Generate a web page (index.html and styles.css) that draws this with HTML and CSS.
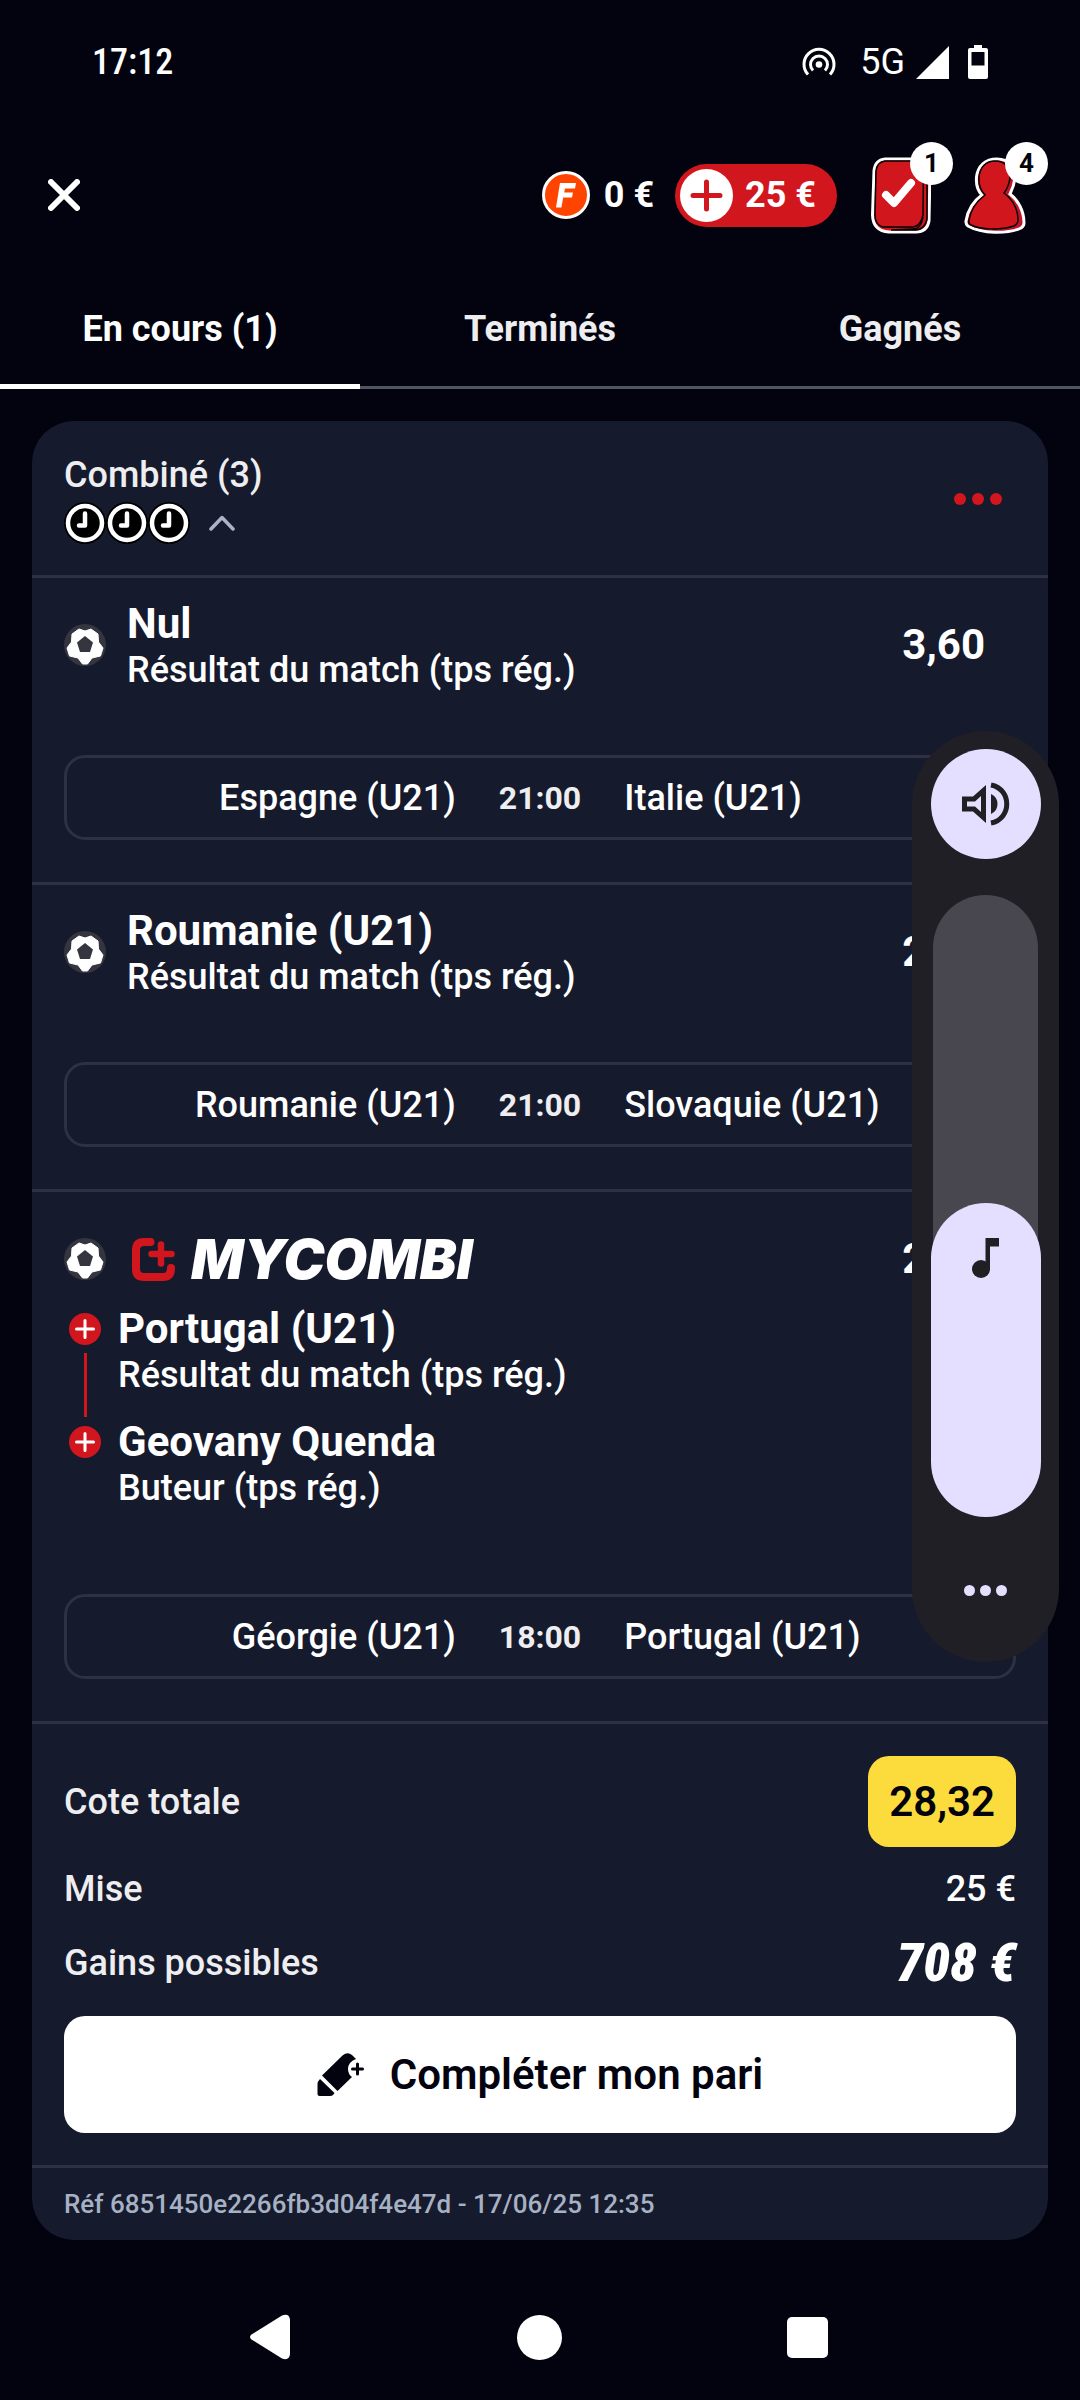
FILE: index.html
```html
<!DOCTYPE html>
<html lang="fr">
<head>
<meta charset="utf-8">
<meta name="viewport" content="width=device-width, initial-scale=1">
<title>Mes paris</title>
<link rel="stylesheet" href="styles.css">
</head>
<body>
<svg class="defs" aria-hidden="true">
  <symbol id="ball" viewBox="0 0 42 42">
    <circle cx="21" cy="21" r="21" fill="#35353f"/>
    <path d="M15 5 L21 7 L27 5 L34 10 L34.500 18 L39 24 L36.500 32 L28 34 L23.500 40 H18.500 L14 34 L5.500 32 L3 24 L7.500 18 L8 10 Z" fill="#fff" stroke="#fff" stroke-linejoin="round"/>
    <path d="M21 12 L29 18.500 L26 28 H16 L13 18.500 Z" fill="#35353f"/>
  </symbol>
  <symbol id="clock" viewBox="0 0 42 42">
    <circle cx="21" cy="21" r="21" fill="#000"/>
    <circle cx="21" cy="21" r="17" fill="#000" stroke="#fff" stroke-width="4.500"/>
    <path d="M21 11.500 V23.500 H15" fill="none" stroke="#fff" stroke-width="4.500" stroke-linecap="round" stroke-linejoin="round"/>
  </symbol>
  <symbol id="plus" viewBox="0 0 32 32">
    <circle cx="16" cy="16" r="16" fill="#d2161e"/>
    <path d="M16 7.500 V24.500 M7.500 16 H24.500" stroke="#fff" stroke-width="3" stroke-linecap="round"/>
  </symbol>
</svg>

<div class="page">
  <div class="status">
    <span class="status-time">17:12</span>
    <div class="status-icons">
      <svg class="hotspot" width="34" height="30" viewBox="0 0 34 30" fill="none" stroke="#fff" stroke-width="3">
        <path d="M6 27.500 A15 15 0 1 1 28 27.500"/>
        <path d="M11 23.500 A8.500 8.500 0 1 1 23 23.500"/>
        <circle cx="17" cy="17.500" r="3.300" fill="#fff" stroke="none"/>
      </svg>
      <span class="network">5G</span>
      <svg class="signal" width="33" height="33" viewBox="0 0 33 33"><path d="M33 0 V33 H0 Z" fill="#fff"/></svg>
      <svg width="20" height="34" viewBox="0 0 20 34"><path fill="#fff" fill-rule="evenodd" d="M6 0 H14 V3 H18 Q20 3 20 5 V32 Q20 34 18 34 H2 Q0 34 0 32 V5 Q0 3 2 3 H6 Z M3.500 7 V20.500 H16.500 V7 Z"/></svg>
    </div>
  </div>

  <header class="header">
    <button class="icon-btn close" aria-label="Fermer">
      <svg width="32" height="32" viewBox="0 0 32 32"><path d="M3 3 L29 29 M29 3 L3 29" stroke="#fff" stroke-width="6" stroke-linecap="round"/></svg>
    </button>
    <div class="wallet">
      <div class="coins">
        <svg width="48" height="48" viewBox="0 0 48 48">
          <circle cx="24" cy="24" r="22.500" fill="#ff4400" stroke="#fff" stroke-width="3"/>
          <path d="M18 12 H34 L33 17.500 H23 L22.200 21.500 H31 L30 26.500 H21.200 L19.400 36.500 H14 Z" fill="#fff"/>
        </svg>
        <span>0 €</span>
      </div>
      <button class="deposit">
        <svg width="53" height="53" viewBox="0 0 53 53"><circle cx="26.500" cy="26.500" r="26.500" fill="#fff"/><path d="M26.500 13 V40 M13 26.500 H40" stroke="#d2161e" stroke-width="5" stroke-linecap="round"/></svg>
        <span>25 €</span>
      </button>
    </div>
    <button class="icon-btn shortcut" aria-label="Mes paris">
      <svg width="60" height="77" viewBox="0 0 60 77">
        <path d="M14 2 H48 Q59 3 59 14 L58 64 Q56 75 45 75 H18 Q2 74 1.500 58 L3 14 Q4 3 14 2 Z" fill="#d2161e" stroke="#fff" stroke-width="3"/>
        <path d="M14 4 H46 Q53 5 52.500 13 L52 58 Q50 69 42 70 H12 Q4 68 4 58 L5 14 Q6 5 14 4 Z" fill="#d2161e" stroke="#000" stroke-width="1.500"/>
        <path d="M52 60 Q50 72 42 72 L20 73 H45 Q54 72 56 62 V20" fill="none" stroke="#000" stroke-width="1.500"/>
        <path d="M15 38 L23 46 L40 26" fill="none" stroke="#fff" stroke-width="8" stroke-linecap="round" stroke-linejoin="round"/>
      </svg>
      <span class="count">1</span>
    </button>
    <button class="icon-btn shortcut" aria-label="Mon compte">
      <svg width="62" height="77" viewBox="0 0 62 77">
        <path d="M33 2 C45 2 52 11 51 21 C50 29 48 33 46 37 C54 43 60 54 60 66 Q60 69 57 71 C44 77 18 77 4 69 Q1.500 67 2 64 C4 52 11 43 18 38 C13 33 12 26 12.500 20 C14 9 21 2 33 2 Z" fill="#c01528" stroke="#fff" stroke-width="3"/>
        <path d="M31 4 C41 4 47 11 46 21 C45 29 43 32 40 36 C49 43 54 53 54 63 Q54 67 50 69 C38 73 16 73 7 68 Q4 67 5 63 C7 52 13 44 21 38 C16 33 14.500 27 15 20 C16 10 22 4 31 4 Z" fill="#d2161e" stroke="#000" stroke-width="1.500"/>
      </svg>
      <span class="count">4</span>
    </button>
  </header>

  <nav class="tabs">
    <a class="tab tab-active" href="#en-cours">En cours (1)</a>
    <a class="tab" href="#termines">Terminés</a>
    <a class="tab" href="#gagnes">Gagnés</a>
  </nav>

  <main class="card" id="en-cours">
    <div class="card-head">
      <div>
        <h1 class="card-title">Combiné (3)</h1>
        <div class="clocks">
          <svg class="glyph"><use href="#clock"/></svg>
          <svg class="glyph"><use href="#clock"/></svg>
          <svg class="glyph"><use href="#clock"/></svg>
          <button class="icon-btn toggle" aria-label="Replier"><svg width="26" height="16" viewBox="0 0 26 16"><path d="M2 14 L13 2.500 L24 14" fill="none" stroke="#a9b4c6" stroke-width="3.500" stroke-linecap="round" stroke-linejoin="round"/></svg></button>
        </div>
      </div>
      <button class="icon-btn more" aria-label="Options"><i></i><i></i><i></i></button>
    </div>

    <section class="leg">
      <div class="pick">
        <svg class="glyph"><use href="#ball"/></svg>
        <div class="pick-text"><h2>Nul</h2><p>Résultat du match (tps rég.)</p></div>
        <span class="odds">3,60</span>
      </div>
      <div class="match"><span class="home">Espagne (U21)</span><time>21:00</time><span>Italie (U21)</span></div>
    </section>

    <section class="leg">
      <div class="pick">
        <svg class="glyph"><use href="#ball"/></svg>
        <div class="pick-text"><h2>Roumanie (U21)</h2><p>Résultat du match (tps rég.)</p></div>
        <span class="odds">2,85</span>
      </div>
      <div class="match"><span class="home">Roumanie (U21)</span><time>21:00</time><span>Slovaquie (U21)</span></div>
    </section>

    <section class="leg leg-combi">
      <div class="pick combi-head">
        <svg class="glyph"><use href="#ball"/></svg>
        <div class="brand">
          <svg width="43" height="43" viewBox="0 0 43 43" fill="none" stroke="#d2161e" stroke-linecap="round">
            <path d="M18.500 4 H12 Q4 4 4 12 V31 Q4 39 12 39 H31 Q39 39 39 30" stroke-width="8"/>
            <path d="M29 6.500 V25.500 M19.500 16 H39.500" stroke-width="6.500"/>
          </svg>
          <span>MYCOMBI</span>
        </div>
        <span class="odds">2,76</span>
      </div>
      <ul class="selections">
        <li><div class="rail"><svg class="plus"><use href="#plus"/></svg></div><div><h2>Portugal (U21)</h2><p>Résultat du match (tps rég.)</p></div></li>
        <li><div class="rail"><svg class="plus"><use href="#plus"/></svg></div><div><h2>Geovany Quenda</h2><p>Buteur (tps rég.)</p></div></li>
      </ul>
      <div class="match"><span class="home">Géorgie (U21)</span><time>18:00</time><span>Portugal (U21)</span></div>
    </section>

    <section class="summary">
      <dl>
        <div class="row"><dt>Cote totale</dt><dd class="total">28,32</dd></div>
        <div class="row"><dt>Mise</dt><dd>25 €</dd></div>
        <div class="row row-gain"><dt>Gains possibles</dt><dd class="gain">708 €</dd></div>
      </dl>
      <button class="complete">
        <svg width="47" height="44" viewBox="0 0 47 44" fill="#03030f">
          <path d="M25.500 2.500 Q30.500 -1.500 35 2 L39 6 Q31 9 31 16 Q31 21 35 24 L20.500 38 L5 22.500 Z"/>
          <path d="M3 26 L17.500 40 L16 42 Q15 43 13 43 H2.500 Q0.500 43 0.500 41 V31 Q0.500 28.500 3 26 Z"/>
          <path d="M40.500 11 V21 M35.500 16 H45.500" stroke="#03030f" stroke-width="3" stroke-linecap="round"/>
        </svg>
        <span>Compléter mon pari</span>
      </button>
    </section>

    <footer class="ref">Réf 6851450e2266fb3d04f4e47d - 17/06/25 12:35</footer>
  </main>

  <nav class="system-nav" aria-label="Système">
    <button class="icon-btn" aria-label="Retour"><svg width="45" height="46" viewBox="0 0 45 46"><path d="M2.500 20.500 L33 1.500 Q40.500 -1 41 6 V40 Q40.500 47 33 44.500 L2.500 25.500 Q-0.500 23 2.500 20.500 Z" fill="#fff"/></svg></button>
    <button class="icon-btn" aria-label="Accueil"><svg width="45" height="45" viewBox="0 0 45 45"><circle cx="22.500" cy="22.500" r="22.500" fill="#fff"/></svg></button>
    <button class="icon-btn" aria-label="Applications récentes"><svg width="41" height="41" viewBox="0 0 41 41"><rect width="41" height="41" rx="5" fill="#fff"/></svg></button>
  </nav>

  <aside class="volume">
    <button class="icon-btn ringer" aria-label="Son">
      <svg width="48" height="48" viewBox="1 0 48 48">
        <path d="M1 16.500 H12 L25 5 V43 L12 31.500 H1 Z M6 21.500 V26.500 H14 L20 32 V16 L14 21.500 Z" fill="#1f1f24" fill-rule="evenodd"/>
        <path d="M30 14 Q36.500 17 36.500 24 Q36.500 31 30 34 Z" fill="#1f1f24"/>
        <path d="M30 5 C51 9 51 39 30 43" fill="none" stroke="#1f1f24" stroke-width="5"/>
      </svg>
    </button>
    <label class="level">
      <span class="level-fill" style="height:50.500%">
        <svg width="28" height="42" viewBox="0 0 28 42" fill="#1f1f24"><circle cx="9" cy="32" r="9"/><path d="M13.500 1 H27 V9.500 H18 V32 H13.500 Z"/></svg>
      </span>
      <input type="range" min="0" max="100" value="50" aria-label="Volume multimédia">
    </label>
    <button class="icon-btn more more-volume" aria-label="Plus de réglages"><i></i><i></i><i></i></button>
  </aside>
</div>
</body>
</html>
```
FILE: styles.css
```css
:root {
  --bg: #03030f;
  --card: #161a2d;
  --line: #2e3044;
  --red: #d2161e;
  --lilac: #e4deff;
  --soft: #eeeef0;
}

* { box-sizing: border-box; margin: 0; padding: 0; }

body {
  background: var(--bg);
  color: #fff;
  font: 500 36px/42px Roboto, "Noto Sans", sans-serif;
}

button { border: 0; background: none; color: inherit; font: inherit; cursor: pointer; }
a { color: inherit; text-decoration: none; }
svg { display: block; flex: none; }
ul { list-style: none; }
.defs { position: absolute; width: 0; height: 0; }
.glyph { width: 42px; height: 42px; }
.plus { width: 32px; height: 32px; }
.icon-btn { display: flex; align-items: center; justify-content: center; }

.page { position: relative; display: flex; flex-direction: column; min-height: 100vh; }

/* System status bar */
.status {
  display: flex;
  justify-content: space-between;
  align-items: center;
  height: 124px;
  padding: 0 92px;
}
.status-time { font-family: "Roboto Condensed", Roboto, sans-serif; }
.status-icons { display: flex; align-items: center; }
.network { margin: 0 11px 0 24px; font-weight: 400; }
.signal { margin-right: 19px; }

/* App header */
.header { display: flex; align-items: center; height: 148px; padding: 0 54px 6px 48px; }
.wallet { display: flex; align-items: center; gap: 21px; margin-left: auto; margin-right: 34px; font-weight: 700; }
.coins { display: flex; align-items: center; gap: 14px; }
.deposit {
  display: flex;
  align-items: center;
  gap: 12px;
  height: 63px;
  padding: 0 21px 0 5px;
  border-radius: 32px;
  background: var(--red);
  font-weight: 700;
}
.shortcut { position: relative; }
.shortcut + .shortcut { margin-left: 33px; }
.count {
  position: absolute;
  top: -15px;
  right: -22px;
  width: 43px;
  height: 43px;
  border-radius: 50%;
  background: #fff;
  color: var(--bg);
  font-size: 26px;
  font-weight: 700;
  line-height: 43px;
  text-align: center;
}

/* Tabs */
.tabs { display: grid; grid-template-columns: repeat(3, 1fr); box-shadow: inset 0 -3px #505661; }
.tab { height: 117px; color: var(--soft); font-weight: 700; line-height: 114px; text-align: center; }
.tab-active { border-bottom: 5px solid #fff; color: #fff; }

/* Bet card */
.card { margin: 32px 32px 34px; border-radius: 42px; background: var(--card); }
.card-head { display: flex; justify-content: space-between; align-items: center; padding: 32px 32px 31px; }
.card-title { color: var(--soft); font: inherit; line-height: 44px; }
.clocks { display: flex; align-items: center; margin-top: 5px; }
.toggle { margin-left: 19px; }
.more { gap: 6px; padding: 12px 14px; }
.more i { width: 12px; height: 12px; border-radius: 50%; background: var(--red); }

.leg { padding: 21px 32px 42px; border-top: 3px solid var(--line); }
.leg h2 { font-size: 42px; font-weight: 700; line-height: 50px; }
.pick { display: flex; align-items: center; gap: 21px; }
.odds { margin: 0 31px 0 auto; font-size: 42px; font-weight: 700; }
.match {
  display: grid;
  grid-template-columns: 1fr auto 1fr;
  align-items: center;
  gap: 43px;
  height: 85px;
  margin-top: 64px;
  border: 3px solid var(--line);
  border-radius: 21px;
}
.home { text-align: right; }
.match time { color: var(--soft); font-size: 32px; font-weight: 700; }

.leg-combi { padding-top: 42px; }
.leg-combi .match { margin-top: 85px; }
.combi-head { height: 50px; margin-bottom: 20px; }
.brand {
  display: flex;
  align-items: center;
  gap: 16px;
  margin-left: 5px;
  font: italic 900 55px/50px Inter, sans-serif;
}
.selections { display: grid; gap: 21px; }
.selections li { display: flex; gap: 12px; }
.rail { display: flex; flex-direction: column; align-items: center; gap: 8px; width: 42px; padding-top: 9px; }
.selections li:first-child .rail { margin-bottom: -21px; }
.selections li:first-child .rail::after { content: ""; flex: 1; width: 3px; background: var(--red); }

/* Totals */
.summary { padding: 32px; border-top: 3px solid var(--line); }
.summary dl { display: grid; gap: 21px; margin-bottom: 21px; }
.row { display: flex; justify-content: space-between; align-items: center; height: 42px; }
.row:first-child { height: 91px; }
.row dt { color: var(--soft); }
.total {
  padding: 0 21px;
  border-radius: 21px;
  background: #fcdc3c;
  color: var(--bg);
  font-size: 42px;
  font-weight: 600;
  line-height: 91px;
}
.row-gain { height: 64px; }
.gain { font: italic 900 54px/64px "Roboto Condensed", "Liberation Sans Narrow", sans-serif; }
.complete {
  display: flex;
  justify-content: center;
  align-items: center;
  gap: 26px;
  width: 100%;
  height: 117px;
  border-radius: 21px;
  background: #fff;
  color: var(--bg);
  font-size: 42px;
  font-weight: 600;
}
.ref { padding: 0 32px; border-top: 3px solid var(--line); color: #a6b1c4; font-size: 26px; line-height: 72px; }

/* System navigation */
.system-nav {
  display: grid;
  grid-template-columns: repeat(3, 1fr);
  align-items: center;
  height: 126px;
  margin-top: auto;
  padding: 0 139px 0 137px;
}

/* Volume overlay */
.volume {
  position: absolute;
  top: 731px;
  right: 21px;
  display: flex;
  flex-direction: column;
  align-items: center;
  width: 147px;
  padding: 18px 0 54px;
  border-radius: 74px;
  background: #201f25;
}
.ringer { width: 110px; height: 110px; border-radius: 50%; background: var(--lilac); }
.level {
  position: relative;
  display: flex;
  flex-direction: column;
  align-items: center;
  justify-content: flex-end;
  width: 105px;
  height: 622px;
  margin: 36px 0 56px;
  border-radius: 53px;
  background: #48464f;
}
.level-fill {
  display: flex;
  justify-content: center;
  flex: none;
  width: 110px;
  padding-top: 34px;
  border-radius: 55px;
  background: var(--lilac);
}
.level input { position: absolute; inset: 0; width: 100%; height: 100%; opacity: 0; }
.more-volume { gap: 5px; }
.more-volume i { width: 11px; height: 11px; background: var(--lilac); }
```
